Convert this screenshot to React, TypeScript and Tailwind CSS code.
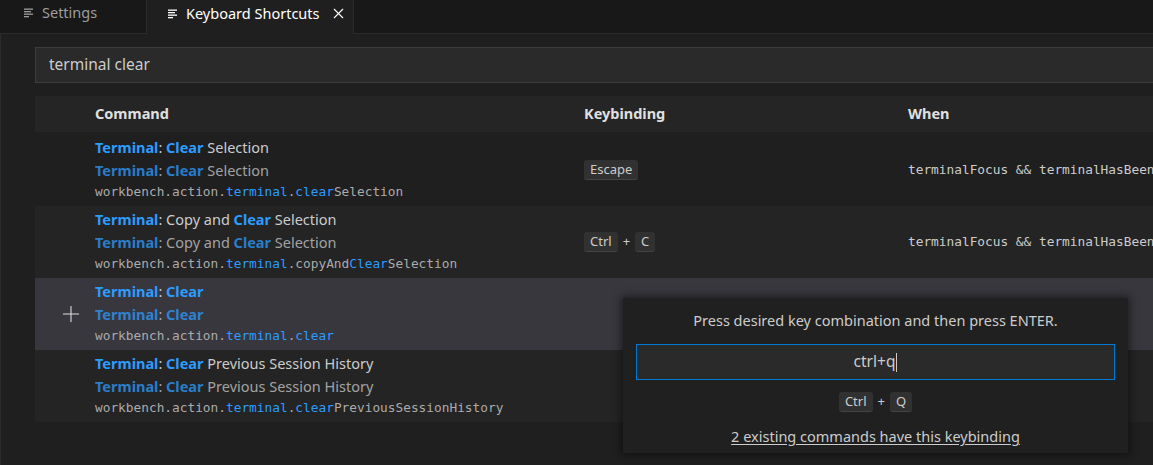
import React from "react";
import { X, Plus } from "lucide-react";

const ui = { fontFamily: '"Noto Sans", "Open Sans", sans-serif' };
const mono = { fontFamily: '"DejaVu Sans Mono", "Liberation Mono", monospace' };

type Part = { t: string; hl?: boolean };

const EditorIcon: React.FC<{ className?: string }> = ({ className }) => (
  <svg viewBox="0 0 10 10" className={className} fill="currentColor">
    <rect x="0" y="0.5" width="9" height="1.3" />
    <rect x="0" y="3" width="7" height="1.3" />
    <rect x="0" y="5.5" width="9" height="1.3" />
    <rect x="0" y="8" width="5" height="1.3" />
  </svg>
);

const Kbd: React.FC<{ children: React.ReactNode }> = ({ children }) => (
  <span className="inline-flex h-[20px] items-center rounded-[3px] border-b border-[#444444] bg-[#313131] px-[6px] text-[13px] text-[#cccccc]">
    {children}
  </span>
);

const Label: React.FC<{ parts: Part[]; bold?: boolean }> = ({ parts, bold = true }) => (
  <>
    {parts.map((p, i) =>
      p.hl ? (
        <span key={i} className={`${bold ? "font-bold" : ""} text-[#2d9cff]`}>
          {p.t}
        </span>
      ) : (
        <span key={i}>{p.t}</span>
      )
    )}
  </>
);

const rows: {
  title: Part[];
  id: Part[];
  keys?: string[];
  when?: string;
  bg: string;
  plus?: boolean;
}[] = [
  {
    title: [{ t: "Terminal", hl: true }, { t: ": " }, { t: "Clear", hl: true }, { t: " Selection" }],
    id: [{ t: "workbench.action." }, { t: "terminal", hl: true }, { t: "." }, { t: "clear", hl: true }, { t: "Selection" }],
    keys: ["Escape"],
    when: "terminalFocus && terminalHasBeenCreated",
    bg: "bg-[#1f1f1f]",
  },
  {
    title: [{ t: "Terminal", hl: true }, { t: ": Copy and " }, { t: "Clear", hl: true }, { t: " Selection" }],
    id: [{ t: "workbench.action." }, { t: "terminal", hl: true }, { t: ".copyAnd" }, { t: "Clear", hl: true }, { t: "Selection" }],
    keys: ["Ctrl", "C"],
    when: "terminalFocus && terminalHasBeenCreated",
    bg: "bg-[#242424]",
  },
  {
    title: [{ t: "Terminal", hl: true }, { t: ": " }, { t: "Clear", hl: true }],
    id: [{ t: "workbench.action." }, { t: "terminal", hl: true }, { t: "." }, { t: "clear", hl: true }],
    bg: "bg-[#37373d]",
    plus: true,
  },
  {
    title: [{ t: "Terminal", hl: true }, { t: ": " }, { t: "Clear", hl: true }, { t: " Previous Session History" }],
    id: [{ t: "workbench.action." }, { t: "terminal", hl: true }, { t: "." }, { t: "clear", hl: true }, { t: "PreviousSessionHistory" }],
    bg: "bg-[#242424]",
  },
];

export default function App() {
  return (
    <div className="relative h-[465px] w-[1153px] overflow-hidden bg-[#1f1f1f] text-[#cccccc]" style={ui}>
      {/* tab bar */}
      <div className="flex h-[34px] bg-[#181818]">
        <div className="flex w-[147px] items-center gap-2 border-r border-b border-[#2b2b2b] pb-[7px] pl-[24px] text-[14.5px] text-[#9d9d9d]">
          <EditorIcon className="h-[10px] w-[10px]" />
          <span>Settings</span>
        </div>
        <div className="flex w-[207px] items-center border-r border-[#2b2b2b] bg-[#1f1f1f] pb-[7px] pl-[21px] text-[14.5px] text-white">
          <EditorIcon className="h-[10px] w-[10px]" />
          <span className="ml-[8px]">Keyboard Shortcuts</span>
          <X className="ml-[10px] h-[17px] w-[17px]" strokeWidth={1.5} />
        </div>
        <div className="flex-1 border-b border-[#2b2b2b]" />
      </div>

      <div className="flex h-[431px]">
        <div className="w-[3px] border-r border-[#2b2b2b] bg-[#181818]" />
        <div className="flex-1 pl-[34px] pt-[13px]">
          {/* search */}
          <div className="flex h-[36px] w-[1200px] items-center border border-[#3c3c3c] bg-[#2a2a2a] pl-[13px] text-[15.5px] text-[#cccccc]">
            terminal clear
          </div>

          {/* table header */}
          <div className="mt-[13px] flex h-[36px] w-[1200px] items-center bg-[#252525] text-[14.5px] font-bold text-[#e0e0e0]">
            <div className="w-[549px] pl-[60px]">Command</div>
            <div className="w-[324px]">Keybinding</div>
            <div>When</div>
          </div>

          <div className="mt-[2px]">
            {rows.map((r, i) => (
              <div key={i} className={`flex h-[72px] w-[1200px] ${r.bg}`}>
                <div className="flex w-[60px] items-center pl-[23px]">
                  {r.plus && <Plus className="h-[26px] w-[26px] text-[#e0e0e0]" strokeWidth={1} />}
                </div>
                <div className="w-[489px] whitespace-pre pt-[2px]">
                  <div className="h-[22px] text-[14.5px] leading-[22px] text-[#cccccc]">
                    <Label parts={r.title} />
                  </div>
                  <div className="h-[24px] text-[14.5px] leading-[24px] text-[#cccccc] opacity-75">
                    <Label parts={r.title} />
                  </div>
                  <div className="h-[20px] text-[12.8px] leading-[20px] text-[#ababab]" style={mono}>
                    <Label parts={r.id} bold={false} />
                  </div>
                </div>
                <div className="flex w-[324px] items-center gap-[5px]">
                  {r.keys &&
                    r.keys.map((k, j) => (
                      <React.Fragment key={k}>
                        {j > 0 && <span className="text-[13px]">+</span>}
                        <Kbd>{k}</Kbd>
                      </React.Fragment>
                    ))}
                </div>
                <div className="flex items-center whitespace-nowrap text-[12.8px] text-[#cccccc]" style={mono}>
                  {r.when}
                </div>
              </div>
            ))}
          </div>
        </div>
      </div>

      {/* define keybinding widget */}
      <div className="absolute left-[623px] top-[298px] flex h-[155px] w-[505px] flex-col items-center bg-[#202020] px-[13px] shadow-[0_0_8px_2px_rgba(0,0,0,0.45)]">
        <div className="flex h-[46px] items-center text-[14.5px] text-[#cccccc]">
          Press desired key combination and then press ENTER.
        </div>
        <div className="flex h-[36px] w-full items-center justify-center border border-[#0078d4] bg-[#2a2a2a] text-[15.5px] text-[#cccccc]">
          ctrl+q<span className="ml-[1px] inline-block h-[19px] w-px bg-[#cccccc]" />
        </div>
        <div className="mt-[12px] flex items-center gap-[5px]">
          <Kbd>Ctrl</Kbd>
          <span className="text-[13px]">+</span>
          <Kbd>Q</Kbd>
        </div>
        <div className="mt-[14px] text-[14.5px] text-[#cccccc] underline underline-offset-2">
          2 existing commands have this keybinding
        </div>
      </div>
    </div>
  );
}
